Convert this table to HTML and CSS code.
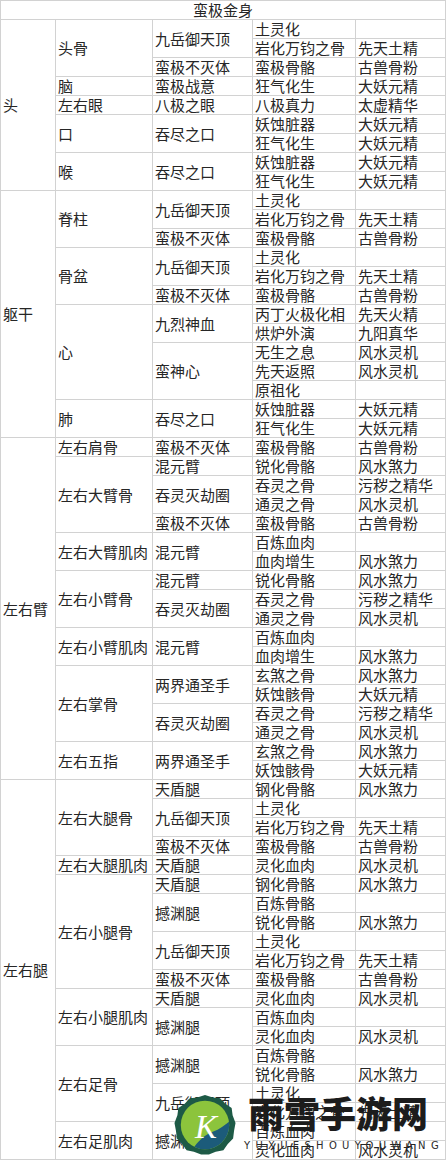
FILE: index.html
```html
<!DOCTYPE html>
<html lang="zh-CN">
<head>
<meta charset="utf-8">
<title>蛮极金身</title>
<link rel="stylesheet" href="styles.css">
</head>
<body>
<table class="grid">
<colgroup><col class="c1"><col class="c2"><col class="c3"><col class="c4"><col class="c5"></colgroup>
<tbody>
<tr><td colspan="5" class="title">蛮极金身</td></tr>

<tr><td rowspan="9">头</td><td rowspan="3">头骨</td><td rowspan="2">九岳御天顶</td><td>土灵化</td><td></td></tr>
<tr><td>岩化万钧之骨</td><td>先天土精</td></tr>
<tr><td>蛮极不灭体</td><td>蛮极骨骼</td><td>古兽骨粉</td></tr>
<tr><td>脑</td><td>蛮极战意</td><td>狂气化生</td><td>大妖元精</td></tr>
<tr><td>左右眼</td><td>八极之眼</td><td>八极真力</td><td>太虚精华</td></tr>
<tr><td rowspan="2">口</td><td rowspan="2">吞尽之口</td><td>妖蚀脏器</td><td>大妖元精</td></tr>
<tr><td>狂气化生</td><td>大妖元精</td></tr>
<tr><td rowspan="2">喉</td><td rowspan="2">吞尽之口</td><td>妖蚀脏器</td><td>大妖元精</td></tr>
<tr><td>狂气化生</td><td>大妖元精</td></tr>

<tr><td rowspan="13">躯干</td><td rowspan="3">脊柱</td><td rowspan="2">九岳御天顶</td><td>土灵化</td><td></td></tr>
<tr><td>岩化万钧之骨</td><td>先天土精</td></tr>
<tr><td>蛮极不灭体</td><td>蛮极骨骼</td><td>古兽骨粉</td></tr>
<tr><td rowspan="3">骨盆</td><td rowspan="2">九岳御天顶</td><td>土灵化</td><td></td></tr>
<tr><td>岩化万钧之骨</td><td>先天土精</td></tr>
<tr><td>蛮极不灭体</td><td>蛮极骨骼</td><td>古兽骨粉</td></tr>
<tr><td rowspan="5">心</td><td rowspan="2">九烈神血</td><td>丙丁火极化相</td><td>先天火精</td></tr>
<tr><td>烘炉外演</td><td>九阳真华</td></tr>
<tr><td rowspan="3">蛮神心</td><td>无生之息</td><td>风水灵机</td></tr>
<tr><td>先天返照</td><td>风水灵机</td></tr>
<tr><td>原祖化</td><td></td></tr>
<tr><td rowspan="2">肺</td><td rowspan="2">吞尽之口</td><td>妖蚀脏器</td><td>大妖元精</td></tr>
<tr><td>狂气化生</td><td>大妖元精</td></tr>

<tr><td rowspan="18">左右臂</td><td>左右肩骨</td><td>蛮极不灭体</td><td>蛮极骨骼</td><td>古兽骨粉</td></tr>
<tr><td rowspan="4">左右大臂骨</td><td>混元臂</td><td>锐化骨骼</td><td>风水煞力</td></tr>
<tr><td rowspan="2">吞灵灭劫圈</td><td>吞灵之骨</td><td>污秽之精华</td></tr>
<tr><td>通灵之骨</td><td>风水灵机</td></tr>
<tr><td>蛮极不灭体</td><td>蛮极骨骼</td><td>古兽骨粉</td></tr>
<tr><td rowspan="2">左右大臂肌肉</td><td rowspan="2">混元臂</td><td>百炼血肉</td><td></td></tr>
<tr><td>血肉增生</td><td>风水煞力</td></tr>
<tr><td rowspan="3">左右小臂骨</td><td>混元臂</td><td>锐化骨骼</td><td>风水煞力</td></tr>
<tr><td rowspan="2">吞灵灭劫圈</td><td>吞灵之骨</td><td>污秽之精华</td></tr>
<tr><td>通灵之骨</td><td>风水灵机</td></tr>
<tr><td rowspan="2">左右小臂肌肉</td><td rowspan="2">混元臂</td><td>百炼血肉</td><td></td></tr>
<tr><td>血肉增生</td><td>风水煞力</td></tr>
<tr><td rowspan="4">左右掌骨</td><td rowspan="2">两界通圣手</td><td>玄煞之骨</td><td>风水煞力</td></tr>
<tr><td>妖蚀骸骨</td><td>大妖元精</td></tr>
<tr><td rowspan="2">吞灵灭劫圈</td><td>吞灵之骨</td><td>污秽之精华</td></tr>
<tr><td>通灵之骨</td><td>风水灵机</td></tr>
<tr><td rowspan="2">左右五指</td><td rowspan="2">两界通圣手</td><td>玄煞之骨</td><td>风水煞力</td></tr>
<tr><td>妖蚀骸骨</td><td>大妖元精</td></tr>

<tr><td rowspan="20">左右腿</td><td rowspan="4">左右大腿骨</td><td>天盾腿</td><td>钢化骨骼</td><td>风水煞力</td></tr>
<tr><td rowspan="2">九岳御天顶</td><td>土灵化</td><td></td></tr>
<tr><td>岩化万钧之骨</td><td>先天土精</td></tr>
<tr><td>蛮极不灭体</td><td>蛮极骨骼</td><td>古兽骨粉</td></tr>
<tr><td>左右大腿肌肉</td><td>天盾腿</td><td>灵化血肉</td><td>风水灵机</td></tr>
<tr><td rowspan="6">左右小腿骨</td><td>天盾腿</td><td>钢化骨骼</td><td>风水煞力</td></tr>
<tr><td rowspan="2">撼渊腿</td><td>百炼骨骼</td><td></td></tr>
<tr><td>锐化骨骼</td><td>风水煞力</td></tr>
<tr><td rowspan="2">九岳御天顶</td><td>土灵化</td><td></td></tr>
<tr><td>岩化万钧之骨</td><td>先天土精</td></tr>
<tr><td>蛮极不灭体</td><td>蛮极骨骼</td><td>古兽骨粉</td></tr>
<tr><td rowspan="3">左右小腿肌肉</td><td>天盾腿</td><td>灵化血肉</td><td>风水灵机</td></tr>
<tr><td rowspan="2">撼渊腿</td><td>百炼血肉</td><td></td></tr>
<tr><td>灵化血肉</td><td>风水灵机</td></tr>
<tr><td rowspan="4">左右足骨</td><td rowspan="2">撼渊腿</td><td>百炼骨骼</td><td></td></tr>
<tr><td>锐化骨骼</td><td>风水煞力</td></tr>
<tr><td rowspan="2">九岳御天顶</td><td>土灵化</td><td></td></tr>
<tr><td>岩化万钧之骨</td><td>先天土精</td></tr>
<tr><td rowspan="2">左右足肌肉</td><td rowspan="2">撼渊腿</td><td>百炼血肉</td><td></td></tr>
<tr><td>灵化血肉</td><td>风水灵机</td></tr>
</tbody>
</table>

<div class="watermark">
  <svg class="badge" width="62" height="62" viewBox="0 0 64 62">
    <defs>
      <clipPath id="inner"><circle cx="32" cy="31" r="25"/></clipPath>
    </defs>
    <polygon fill="#1d5a46" points="32,0 40,2.5 47.5,3.5 53,9 59.5,13.5 60.5,21 63.5,29 62,37 61,45 55.5,50.5 51,57 43,58.5 36,61.5 28,61.5 20.5,58.5 13,57 8.5,50.5 3,45 2,37 0.5,29 3.5,21 4.5,13.5 11,9 16.5,3.5 24,2.5"/>
    <g clip-path="url(#inner)">
      <rect x="0" y="0" width="64" height="62" fill="#8cc43c"/>
      <path d="M16 62 C 22 50, 30 42, 40 38 C 48 35, 54 30, 60 25 L 64 62 Z" fill="#1c5b7a"/>
    </g>
    <text x="33" y="44" text-anchor="middle" class="k">K</text>
  </svg>
  <div class="brand">
    <div class="brand-cn">雨雪手游网</div>
    <div class="brand-en">YUXUESHOUYOUWANG</div>
  </div>
</div>
</body>
</html>
```

FILE: styles.css
```css
html, body {
  margin: 0;
  padding: 0;
  background: #ffffff;
}

body {
  position: relative;
  font-family: "Noto Sans CJK SC", "Noto Sans", sans-serif;
}

.grid {
  border-collapse: collapse;
  table-layout: fixed;
  width: 445px;
  font-size: 15px;
  color: #262626;
}

.c1 { width: 55px; }
.c2 { width: 97px; }
.c3 { width: 100px; }
.c4 { width: 103px; }
.c5 { width: 90px; }

.grid td {
  border: 1px solid #d2d2d2;
  height: 18px;
  padding: 0 2px;
  line-height: 18px;
  white-space: nowrap;
  overflow: hidden;
  vertical-align: middle;
  text-align: left;
}

.grid td.title {
  text-align: center;
}

.watermark {
  position: absolute;
  left: 174px;
  top: 1094px;
  display: flex;
  align-items: flex-start;
}

.badge {
  display: block;
}

.k {
  font-family: "Liberation Serif", serif;
  font-style: italic;
  font-size: 34px;
  fill: #ffffff;
}

.brand {
  margin-left: 10px;
  display: flex;
  flex-direction: column;
  align-items: flex-start;
}

.brand-cn {
  font-family: "Noto Sans CJK SC", sans-serif;
  font-weight: 900;
  font-size: 36px;
  line-height: 40px;
  color: #1c1c1c;
  margin-left: 2px;
  margin-top: -2px;
}

.brand-en {
  font-family: "DejaVu Sans", sans-serif;
  font-size: 10px;
  line-height: 12px;
  letter-spacing: 5.3px;
  color: #2a2a2a;
  margin-top: 8px;
  margin-left: -2px;
}
```
